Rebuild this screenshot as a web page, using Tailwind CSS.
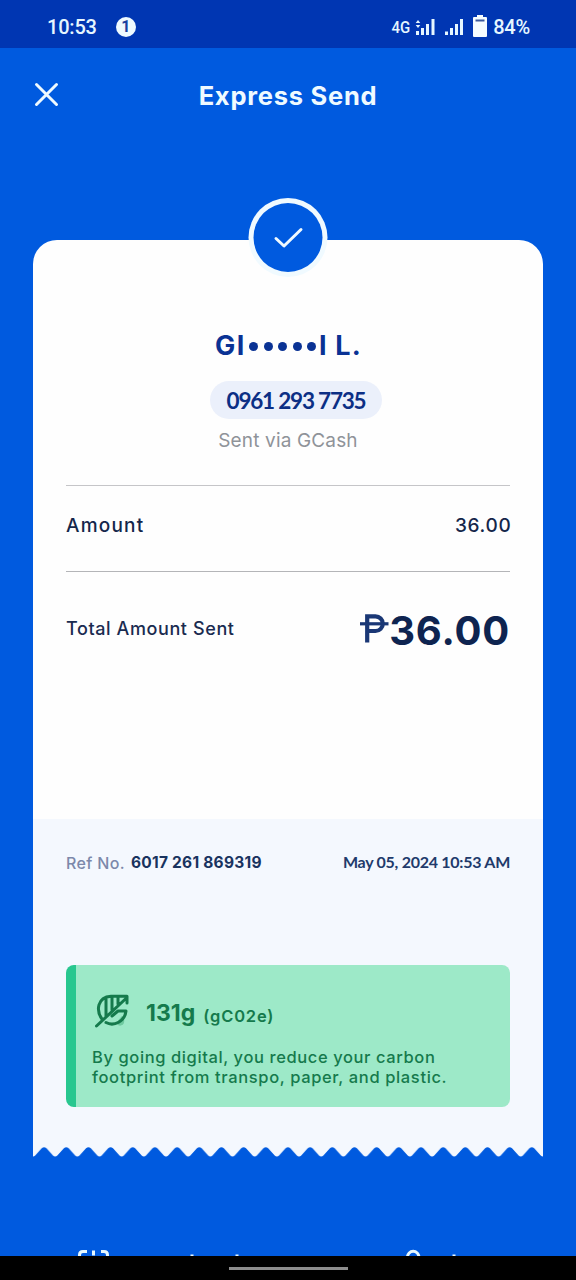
<!DOCTYPE html>
<html lang="en">
<head>
<meta charset="utf-8">
<title>Express Send</title>
<script src="https://cdn.jsdelivr.net/npm/@tailwindcss/browser@4"></script>
</head>
<body class="w-[576px] h-[1280px] overflow-hidden bg-[#005adf] font-['Inter','Liberation_Sans',sans-serif]">
<div class="flex flex-col w-[576px] h-[1280px] whitespace-nowrap">
  <header class="h-12 shrink-0 bg-[#0036b2] text-[#e6f6ff] font-['Roboto','Liberation_Sans',sans-serif] flex items-center justify-between pl-[47px] pr-[46px] pt-[6px]">
    <div class="flex items-center">
      <span class="text-[20px] leading-6 font-medium tracking-[-0.2px]">10:53</span>
      <span class="ml-[19px] size-5 rounded-full bg-[#eefaff] text-[#17409f] text-[16px] font-bold flex items-center justify-center">1</span>
    </div>
    <div class="flex items-center">
      <span class="origin-right scale-x-[0.88] text-[17px] leading-6 font-medium">4G</span>
      <svg class="ml-[5px]" width="20" height="20" viewBox="0 0 20 20" fill="currentColor"><path d="M3 3l2.300 3H.7zM3 11L.7 8h4.600zM1 14h3v4H1zM6 11h3v7H6zM11 7h3v11h-3zM16.500 2h3v16h-3z"/></svg>
      <svg class="ml-[9px]" width="20" height="20" viewBox="0 0 20 20" fill="currentColor"><path d="M1 14.500h3V18H1zM6 11h3v7H6zM11 7h3v11h-3zM16 2h3v16h-3z"/></svg>
      <svg class="ml-[9px] mb-[2px]" width="14" height="22" viewBox="0 0 14 22"><path fill="#f5fcff" d="M4 0h6v2h3q1 0 1 1v18q0 1-1 1H1q-1 0-1-1V3q0-1 1-1h3z"/><path fill="#3c5a9c" d="M2.500 4.500h9v2h-9z"/></svg>
      <span class="ml-[6px] text-[20px] leading-6 font-medium tracking-[-0.2px]">84%</span>
    </div>
  </header>

  <main class="h-[1208px] shrink-0 overflow-hidden flex flex-col items-center">
    <div class="h-24 w-full shrink-0 grid grid-cols-[1fr_auto_1fr] items-center text-[#effaff]">
      <svg class="ml-[34px] mb-[3px]" width="25" height="25" viewBox="0 0 25 25" fill="none" stroke="currentColor" stroke-width="3" stroke-linecap="round"><path d="M2.500 2.500l20 20M22.500 2.500l-20 20"/></svg>
      <h1 class="text-[25.500px] leading-8 font-bold tracking-[0.750px]">Express Send</h1>
    </div>

    <section class="relative mt-24 w-[510px] h-[917px] shrink-0 flex flex-col">
      <div class="absolute left-1/2 -translate-x-1/2 -top-[42px] size-[79px] rounded-full bg-[#f0faff] flex items-center justify-center">
        <div class="size-[69px] rounded-full bg-[#005adf] flex items-center justify-center">
          <svg width="30" height="22" viewBox="0 0 30 22" fill="none" stroke="#f0faff" stroke-width="3" stroke-linecap="round" stroke-linejoin="round"><path d="M2.500 11.500l8 7.500L27.500 2.500"/></svg>
        </div>
      </div>

      <div class="h-[579px] shrink-0 bg-[#fefefe] rounded-t-[24px] px-[33px] pt-[88px] flex flex-col items-center">
        <div class="h-9 w-[146px] flex items-center text-[27px] font-bold text-[#0a3294]">
          <span class="w-[34px] shrink-0 tracking-[1.500px]">GI</span>
          <span class="w-[67px] shrink-0 flex justify-between"><i class="size-[9px] rounded-full bg-current"></i><i class="size-[9px] rounded-full bg-current"></i><i class="size-[9px] rounded-full bg-current"></i><i class="size-[9px] rounded-full bg-current"></i><i class="size-[9px] rounded-full bg-current"></i></span>
          <span class="ml-[3px] shrink-0 tracking-[1.200px]">I L.</span>
        </div>
        <div class="mt-[17px] ml-4 w-[172px] h-[38px] rounded-full bg-[#ebf0fb] flex items-center justify-center text-[22.500px] leading-[38px] pt-px font-bold text-[#0c2f85] font-['Lato','Liberation_Sans',sans-serif] tracking-[-1.200px]">0961 293 7735</div>
        <p class="mt-[9px] h-6 leading-[26px] text-[19px] text-[#8f9399] tracking-[0.150px]">Sent via GCash</p>
        <div class="mt-[33px] w-full h-px bg-[#c5c5c8]"></div>
        <div class="w-full h-[85px] pb-[5px] flex items-center justify-between text-[#14264a] font-medium text-[19px]"><span class="tracking-[1.200px]">Amount</span><span class="tracking-[0.700px] -mr-[1.500px]">36.00</span></div>
        <div class="w-full h-px bg-[#b4b5b8]"></div>
        <div class="w-full h-[114px] flex items-center justify-between text-[#1a2b50]"><span class="mb-px text-[18px] font-medium tracking-[0.600px]">Total Amount Sent</span>
          <span class="flex items-center text-[#0e2450] mt-1">
            <svg class="mb-[5px] text-[#1a3775]" width="29" height="29" viewBox="0 0 29 29" fill="none" stroke="currentColor"><path stroke-width="4.200" d="M7.200 28.500V2.400h8.300a7 7 0 0 1 0 14.600H7.200"/><path stroke-width="3.200" d="M0 9.800h28.500"/></svg>
            <span class="text-[40px] leading-[48px] font-bold tracking-[0.800px]">36.00</span></span></div>
      </div>

      <div class="h-[328px] shrink-0 bg-[#f4f8fe] px-[33px] flex flex-col">
        <div class="h-[146px] pb-[60px] shrink-0 flex items-center justify-between">
          <span class="text-[16px] mt-[2px] flex items-center"><span class="font-medium text-[#7c88aa] tracking-[0.350px]">Ref No.</span><span class="ml-[6px] font-bold text-[#19335f] text-[15.500px] tracking-[0.250px]">6017 261 869319</span></span>
          <span class="text-[16px] font-bold text-[#213a6b] font-['Lato','Liberation_Sans',sans-serif] tracking-[-0.270px]">May 05, 2024 10:53 AM</span>
        </div>
        <div class="h-[142px] shrink-0 rounded-[8px] border-l-[10px] border-[#28c78f] bg-[#9de9c8] pl-4 text-[#157a4c] flex flex-col">
          <div class="mt-7 h-9 flex items-center">
            <svg class="ml-[2px]" width="36" height="36" viewBox="0 0 36 36" fill="none" stroke="currentColor" stroke-width="3" stroke-linecap="round" stroke-linejoin="round"><path d="M28 23q3 3 2 7a4 4 0 0 1-7 1q0-3 5-8z" fill="#6fcaa0" stroke="none"/><path d="M2.500 33L33 4.500M33 10V3.200H17C3 4 2 18 8 26M12 29.500C20 34 31 28 32 18h-8l-6 5M12 6v17M18 4v13M24 4v7"/></svg>
            <span class="ml-[16px] mt-[4px] text-[23px] font-bold">131g</span>
            <span class="ml-[8px] mt-[10px] text-[16.500px] font-semibold tracking-[0.800px]">(gC02e)</span>
          </div>
          <p class="mt-[18px] text-[16.500px] leading-5 font-medium"><span class="tracking-[0.600px]">By going digital, you reduce your carbon</span><br><span class="tracking-[0.630px]">footprint from transpo, paper, and plastic.</span></p>
        </div>
      </div>
      <svg class="shrink-0 -mt-px" width="510" height="11" viewBox="0 0 510 11"><defs><pattern id="teeth" width="22.170" height="11" patternUnits="userSpaceOnUse"><path fill="#f4f8fe" d="M0 0H22.170V10.500Q21 10.500 20 9.500L13.500 2.300Q11.100 .2 8.700 2.300L2.200 9.500Q1.200 10.500 0 10.500z"/></pattern></defs><rect width="510" height="11" fill="url(#teeth)"/></svg>
    </section>

    <div class="mt-[91px] w-full h-2 shrink-0 flex text-[#e6f8ff]">
      <svg width="576" height="8" viewBox="0 0 576 8" fill="none" stroke="currentColor" stroke-width="3"><path d="M79.500 9V7q0-3.500 3.500-3.500H87M93.500 2.500V7.500M101 3.500h3q3.500 0 3.500 3.500v2M407.500 9a5.700 5.700 0 0 1 11.400 0"/><path stroke-width="2" d="M190.500 7.500h3M235.500 7.500h3M452.500 7.500h3"/></svg>
    </div>
  </main>

  <footer class="h-6 shrink-0 bg-black flex justify-center items-center"><div class="h-[3px] w-[119px] bg-[#8e8e8e]"></div></footer>
</div>
</body>
</html>
